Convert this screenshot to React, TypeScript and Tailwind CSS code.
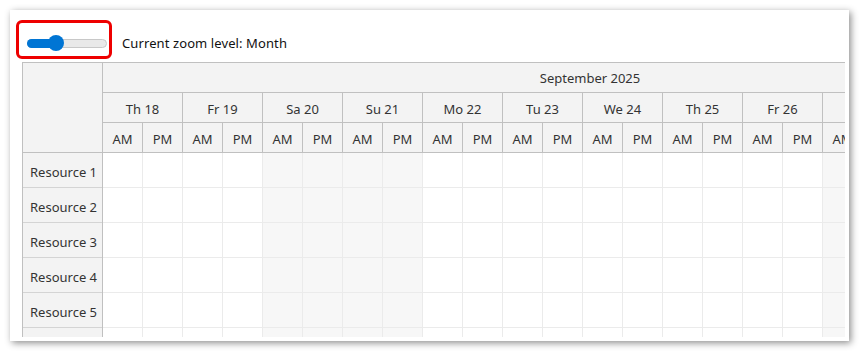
import React from 'react';

const days = [
  { label: 'Th 18', weekend: false },
  { label: 'Fr 19', weekend: false },
  { label: 'Sa 20', weekend: true },
  { label: 'Su 21', weekend: true },
  { label: 'Mo 22', weekend: false },
  { label: 'Tu 23', weekend: false },
  { label: 'We 24', weekend: false },
  { label: 'Th 25', weekend: false },
  { label: 'Fr 26', weekend: false },
  { label: 'Sa 27', weekend: true },
];

const resources = ['Resource 1', 'Resource 2', 'Resource 3', 'Resource 4', 'Resource 5', ''];

const font = { fontFamily: '"Noto Sans", "Open Sans", sans-serif' };

const App = () => {
  return (
    <div className="w-[860px] h-[352px] bg-white p-[10px]" style={font}>
      <div className="w-[839px] h-[331px] bg-white shadow-[2px_2px_7px_rgba(0,0,0,0.45)] pt-3 pl-3 overflow-hidden">
        {/* Toolbar */}
        <div className="h-[40px] flex items-center">
          <div className="relative w-[92px] h-full flex items-center">
            <div className="ml-[5px] w-[80px] h-[9px] rounded-full bg-[#e9e9e9] border border-[#c8c8c8] relative mt-[2px]">
              <div className="absolute left-[-1px] top-[-1px] h-[9px] w-[29px] rounded-full bg-[#0075d4]" />
              <div className="absolute left-[20px] top-[-5px] w-[16px] h-[16px] rounded-full bg-[#0075d4]" />
            </div>
            {/* annotation */}
            <div className="absolute left-[-6px] top-[-2px] w-[96px] h-[39px] border-[3px] border-[#ee0000] rounded-[6px]" />
          </div>
          <span className="ml-2 text-[13px] text-[#111] mt-[4px] tracking-[0.1px]">Current zoom level: Month</span>
        </div>

        {/* Scheduler */}
        <div className="w-[823px] h-[275px] flex overflow-hidden text-[13px] text-[#333]">
          <div className="w-[81px] shrink-0 flex flex-col border-l border-r border-[#c0c0c0] bg-[#f3f3f3]">
            <div className="h-[91px] shrink-0 border-t border-b border-[#c0c0c0]" />
            {resources.map((r, i) => (
              <div key={i} className="h-[35px] shrink-0 border-b border-[#d4d4d4] flex items-center pl-[7px] pt-[5px]">
                {r}
              </div>
            ))}
          </div>

          <div className="flex-1 overflow-hidden">
            <div className="w-[974px] h-[31px] border-t border-b border-[#c0c0c0] bg-[#f3f3f3] flex items-center justify-center pt-[2px]">
              September 2025
            </div>
            <div className="flex h-[30px]">
              {days.map((d) => (
                <div
                  key={d.label}
                  className="w-[80px] shrink-0 border-r border-b border-[#c0c0c0] bg-[#f3f3f3] flex items-center justify-center pt-[4px]"
                >
                  {d.label}
                </div>
              ))}
            </div>
            <div className="flex h-[30px]">
              {days.map((d) => (
                <React.Fragment key={d.label}>
                  <div className="w-[40px] shrink-0 border-r border-b border-[#c0c0c0] bg-[#f3f3f3] flex items-center justify-center pt-[4px]">
                    AM
                  </div>
                  <div className="w-[40px] shrink-0 border-r border-b border-[#c0c0c0] bg-[#f3f3f3] flex items-center justify-center pt-[4px]">
                    PM
                  </div>
                </React.Fragment>
              ))}
            </div>
            {resources.map((r, i) => (
              <div key={i} className="flex h-[35px]">
                {days.map((d) => (
                  <React.Fragment key={d.label}>
                    <div
                      className={`w-[40px] shrink-0 border-r border-b border-[#ebebeb] ${d.weekend ? 'bg-[#f7f7f7]' : 'bg-white'}`}
                    />
                    <div
                      className={`w-[40px] shrink-0 border-r border-b border-[#ebebeb] ${d.weekend ? 'bg-[#f7f7f7]' : 'bg-white'}`}
                    />
                  </React.Fragment>
                ))}
              </div>
            ))}
          </div>
        </div>
      </div>
    </div>
  );
};

export default App;
